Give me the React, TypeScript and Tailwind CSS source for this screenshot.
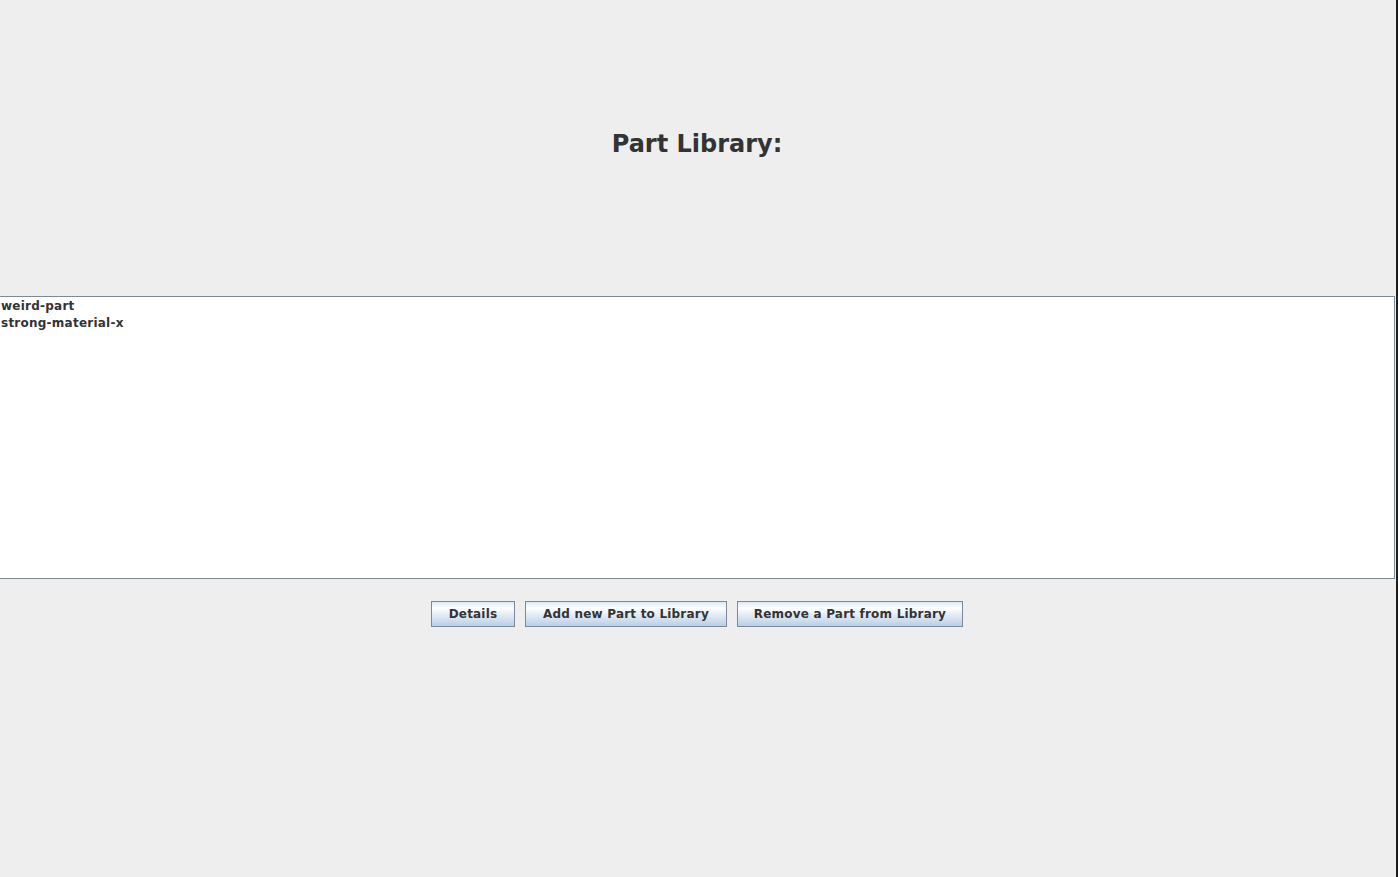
const parts = ['weird-part', 'strong-material-x'];

const buttons = [
  { label: 'Details', width: 'w-[84px]' },
  { label: 'Add new Part to Library', width: 'w-[202px]' },
  { label: 'Remove a Part from Library', width: 'w-[226px]' },
];

export default function App() {
  return (
    <div
      className="flex h-[877px] w-[1398px] bg-[#eeeeee] text-[#333333]"
      style={{ fontFamily: '"DejaVu Sans", sans-serif' }}
    >
      <div className="flex w-[1396px] flex-col">
        {/* Title */}
        <div className="h-[296px] pr-[2px] pt-[130px] text-center">
          <h1 className="text-[24px] font-bold leading-[28px]">Part Library:</h1>
        </div>

        {/* Part list */}
        <div className="h-[283px] w-[1395px] border-y border-r border-[#7a8a99] bg-white pt-[1px]">
          {parts.map((p) => (
            <div key={p} className="h-[17px] pl-[1px] text-[12px] font-bold leading-[17px] tracking-[0.24px]">
              {p}
            </div>
          ))}
        </div>

        {/* Buttons */}
        <div className="mt-[22px] flex justify-center gap-[10px] pr-[2px]">
          {buttons.map((b) => (
            <button
              key={b.label}
              className={`${b.width} h-[26px] border border-[#7a8a99] bg-[linear-gradient(to_bottom,#dde8f3_0%,#ffffff_25%,#e6eef7_50%,#b8cfe5_100%)] text-[12px] font-bold tracking-[0.2px] text-[#333333]`}
            >
              {b.label}
            </button>
          ))}
        </div>
      </div>
      <div className="w-[2px] bg-[#1e1e1e]" />
    </div>
  );
}
